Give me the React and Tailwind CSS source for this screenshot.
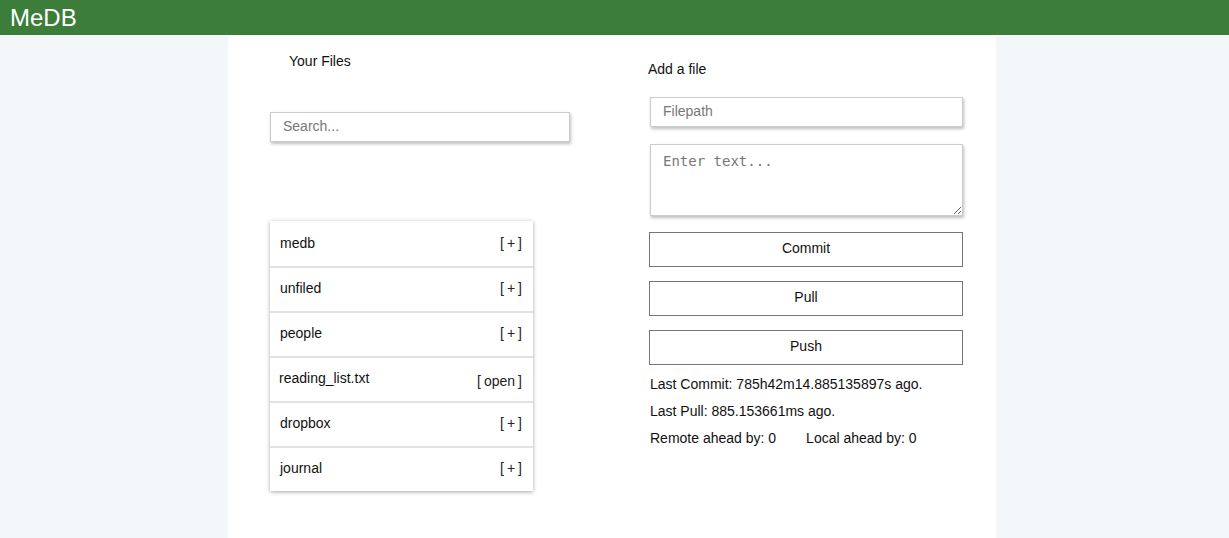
const files = [
  { name: "medb", action: "+" },
  { name: "unfiled", action: "+" },
  { name: "people", action: "+" },
  { name: "reading_list.txt", action: "open", file: true },
  { name: "dropbox", action: "+" },
  { name: "journal", action: "+" },
];

export default function App() {
  return (
    <div className="min-h-screen w-full bg-[#f4f7fa] font-['Liberation_Sans',Arial,sans-serif] text-[14px] text-[#111]">
      <header className="flex h-[35px] items-center bg-[#3b7d39] pl-[10px]">
        <span className="text-[24px] leading-none text-white">MeDB</span>
      </header>

      <main className="ml-[228px] flex min-h-[503px] w-[768px] bg-white pl-[42px]">
        {/* left column: file list */}
        <section className="w-[379px]">
          <h2 className="mt-[16px] pl-[19px] leading-[20px]">Your Files</h2>
          <input
            className="mt-[41px] h-[30px] w-[300px] border border-[#ccc] px-[12px] pb-[2px] text-[14px] shadow-[1px_2px_3px_rgba(0,0,0,0.25)] outline-none placeholder:text-[#777]"
            placeholder="Search..."
          />
          <ul className="mt-[79px] w-[263px] shadow-[0_1px_4px_rgba(0,0,0,0.35)]">
            {files.map((f, i) => (
              <li
                key={f.name}
                className={`flex h-[45px] items-center justify-between pr-[11px] ${
                  f.file ? "pl-[9px]" : "pl-[10px]"
                } ${i > 0 ? "border-t-2 border-[#e2e2e2] pb-[2px]" : ""}`}
              >
                <span className={f.file ? "-mt-[1px]" : ""}>{f.name}</span>
                <span className={`text-[#222] ${f.file ? "mt-[5px]" : ""}`}>
                  [<span className="mx-[3px]">{f.action}</span>]
                </span>
              </li>
            ))}
          </ul>
        </section>

        {/* right column: add a file */}
        <section className="w-[314px]">
          <h2 className="mt-[24px] -ml-[1px] leading-[20px]">Add a file</h2>
          <input
            className="ml-[1px] mt-[18px] h-[30px] w-[313px] border border-[#ccc] px-[12px] pb-[2px] text-[14px] shadow-[1px_2px_3px_rgba(0,0,0,0.25)] outline-none placeholder:text-[#777]"
            placeholder="Filepath"
          />
          <textarea
            className="ml-[1px] mt-[17px] block h-[72px] w-[313px] border border-[#ccc] px-[12px] py-[6px] font-['DejaVu_Sans_Mono',monospace] text-[14px] shadow-[1px_2px_3px_rgba(0,0,0,0.25)] outline-none placeholder:text-[#777]"
            placeholder="Enter text..."
          />
          <div className="mt-[16px] flex flex-col gap-[14px]">
            {["Commit", "Pull", "Push"].map((b) => (
              <button
                key={b}
                className="h-[35px] w-[314px] border border-[#767676] bg-white pb-[2px] text-[14px] text-[#111]"
              >
                {b}
              </button>
            ))}
          </div>
          <div className="mt-[6px] pl-[1px] leading-[27px]">
            <p>Last Commit: 785h42m14.885135897s ago.</p>
            <p>Last Pull: 885.153661ms ago.</p>
            <p className="flex gap-[30px]">
              <span>Remote ahead by: 0</span>
              <span>Local ahead by: 0</span>
            </p>
          </div>
        </section>
      </main>
    </div>
  );
}
